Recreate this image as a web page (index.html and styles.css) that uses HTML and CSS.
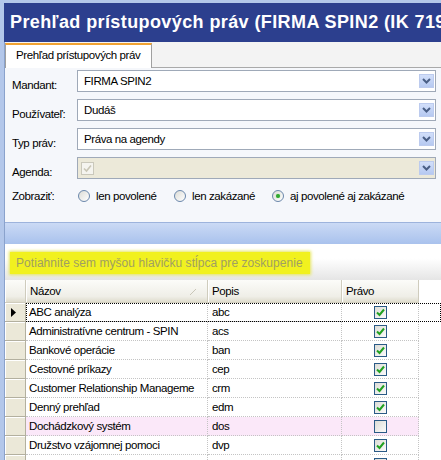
FILE: index.html
```html
<!DOCTYPE html>
<html>
<head>
<meta charset="utf-8">
<link rel="stylesheet" href="styles.css">
</head>
<body>
<div class="window">
  <div class="titlebar"><span>Prehľad prístupových práv (FIRMA SPIN2 (IK 71945)</span></div>
  <div class="body">
    <div class="tabstrip"><div class="tab">Prehľad prístupových práv</div></div>
    <div class="form">
      <div class="row">
        <label class="lbl">Mandant:</label>
        <div class="combo"><span class="val">FIRMA SPIN2</span><i class="btn"><svg width="15" height="14" viewBox="0 0 15 14"><path d="M4 5 L7.5 8.5 L11 5" fill="none" stroke="#4a5f86" stroke-width="2"/></svg></i></div>
      </div>
      <div class="row">
        <label class="lbl">Používateľ:</label>
        <div class="combo"><span class="val">Dudáš</span><i class="btn"><svg width="15" height="14" viewBox="0 0 15 14"><path d="M4 5 L7.5 8.5 L11 5" fill="none" stroke="#4a5f86" stroke-width="2"/></svg></i></div>
      </div>
      <div class="row">
        <label class="lbl">Typ práv:</label>
        <div class="combo"><span class="val">Práva na agendy</span><i class="btn"><svg width="15" height="14" viewBox="0 0 15 14"><path d="M4 5 L7.5 8.5 L11 5" fill="none" stroke="#4a5f86" stroke-width="2"/></svg></i></div>
      </div>
      <div class="row">
        <label class="lbl">Agenda:</label>
        <div class="combo disabled"><span class="dchk"><svg width="11" height="11" viewBox="0 0 11 11"><path d="M2 5.5 L4.5 8 L9 2.5" fill="none" stroke="#c9c6b6" stroke-width="1.6"/></svg></span><i class="btn"><svg width="15" height="14" viewBox="0 0 15 14"><path d="M4 5 L7.5 8.5 L11 5" fill="none" stroke="#4a5f86" stroke-width="2"/></svg></i></div>
      </div>
      <div class="row radios">
        <label class="lbl2">Zobraziť:</label>
        <div class="opt o1"><span class="radio"></span><span>len povolené</span></div>
        <div class="opt o2"><span class="radio"></span><span>len zakázané</span></div>
        <div class="opt"><span class="radio on"><span class="dot"></span></span><span>aj povolené aj zakázané</span></div>
      </div>
    </div>
    <div class="bluebar"></div>
    <div class="grouppanel"><div class="hint">Potiahnite sem myšou hlavičku stĺpca pre zoskupenie</div></div>
    <div class="grid">
      <div class="ghead">
        <div class="hc"></div>
        <div class="hc">Názov<svg class="sort" width="8" height="8" viewBox="0 0 8 8"><path d="M1 7 L7 1" stroke="#c9c6b8" stroke-width="1"/></svg></div>
        <div class="hc">Popis</div>
        <div class="hc">Právo</div>
      </div>
      <div class="grow focus">
        <div class="ind"><svg width="6" height="9" viewBox="0 0 6 9"><path d="M0 0 L5 4.5 L0 9 Z" fill="#000"/></svg></div>
        <div class="c">ABC analýza</div><div class="c p">abc</div><div class="c k"><span class="chk"><svg width="11" height="11" viewBox="0 0 11 11"><path d="M2 5.5 L4.5 8 L9 2.5" fill="none" stroke="#21a121" stroke-width="2"/></svg></span></div>
      </div>
      <div class="grow">
        <div class="ind"></div>
        <div class="c">Administratívne centrum - SPIN</div><div class="c p">acs</div><div class="c k"><span class="chk"><svg width="11" height="11" viewBox="0 0 11 11"><path d="M2 5.5 L4.5 8 L9 2.5" fill="none" stroke="#21a121" stroke-width="2"/></svg></span></div>
      </div>
      <div class="grow">
        <div class="ind"></div>
        <div class="c">Bankové operácie</div><div class="c p">ban</div><div class="c k"><span class="chk"><svg width="11" height="11" viewBox="0 0 11 11"><path d="M2 5.5 L4.5 8 L9 2.5" fill="none" stroke="#21a121" stroke-width="2"/></svg></span></div>
      </div>
      <div class="grow">
        <div class="ind"></div>
        <div class="c">Cestovné príkazy</div><div class="c p">cep</div><div class="c k"><span class="chk"><svg width="11" height="11" viewBox="0 0 11 11"><path d="M2 5.5 L4.5 8 L9 2.5" fill="none" stroke="#21a121" stroke-width="2"/></svg></span></div>
      </div>
      <div class="grow">
        <div class="ind"></div>
        <div class="c">Customer Relationship Manageme</div><div class="c p">crm</div><div class="c k"><span class="chk"><svg width="11" height="11" viewBox="0 0 11 11"><path d="M2 5.5 L4.5 8 L9 2.5" fill="none" stroke="#21a121" stroke-width="2"/></svg></span></div>
      </div>
      <div class="grow">
        <div class="ind"></div>
        <div class="c">Denný prehľad</div><div class="c p">edm</div><div class="c k"><span class="chk"><svg width="11" height="11" viewBox="0 0 11 11"><path d="M2 5.5 L4.5 8 L9 2.5" fill="none" stroke="#21a121" stroke-width="2"/></svg></span></div>
      </div>
      <div class="grow pink">
        <div class="ind"></div>
        <div class="c">Dochádzkový systém</div><div class="c p">dos</div><div class="c k"><span class="chk"></span></div>
      </div>
      <div class="grow">
        <div class="ind"></div>
        <div class="c">Družstvo vzájomnej pomoci</div><div class="c p">dvp</div><div class="c k"><span class="chk"><svg width="11" height="11" viewBox="0 0 11 11"><path d="M2 5.5 L4.5 8 L9 2.5" fill="none" stroke="#21a121" stroke-width="2"/></svg></span></div>
      </div>
      <div class="grow">
        <div class="ind"></div>
        <div class="c">Ekonomické hlásenia</div><div class="c p">ekh</div><div class="c k"><span class="chk"><svg width="11" height="11" viewBox="0 0 11 11"><path d="M2 5.5 L4.5 8 L9 2.5" fill="none" stroke="#21a121" stroke-width="2"/></svg></span></div>
      </div>
    </div>
  </div>
</div>
</body>
</html>
```
FILE: styles.css
```css
html, body {
  margin: 0;
  padding: 0;
}
body {
  width: 441px;
  height: 460px;
  overflow: hidden;
  background: #b3c7ea;
  font-family: "Liberation Sans", Arial, sans-serif;
  font-size: 11.5px;
  letter-spacing: -0.4px;
  color: #000;
}
.window {
  padding: 3px 0 0 4px;
  height: 457px;
  display: flex;
  flex-direction: column;
}
.titlebar {
  height: 39px;
  flex: none;
  background: #2c3f8e;
  color: #fff;
  font-weight: bold;
  font-size: 18px;
  letter-spacing: 0.4px;
  display: flex;
  align-items: center;
  padding-left: 6px;
  white-space: nowrap;
  overflow: hidden;
}
.body {
  flex: 1;
  border-left: 1px solid #8aa2cc;
  background: #fff;
  display: flex;
  flex-direction: column;
  min-height: 0;
}
.tabstrip {
  height: 26px;
  flex: none;
  box-sizing: border-box;
  background: #f3f3f3;
  border-bottom: 1px solid #a9a9a9;
  display: flex;
  align-items: flex-end;
  padding-top: 1px;
}
.tab {
  height: 25px;
  width: 147px;
  box-sizing: border-box;
  border-top: 2px solid #f0a232;
  border-left: 1px solid #a0a0a0;
  border-right: 1px solid #a0a0a0;
  background: #fff;
  margin-bottom: -1px;
  padding-left: 10px;
  line-height: 21px;
}
.form {
  height: 154px;
  flex: none;
  box-sizing: border-box;
  background: #f5f7fb;
  padding: 2px 5px 0 7px;
  display: flex;
  flex-direction: column;
  gap: 7px;
}
.row {
  display: flex;
  height: 22px;
}
.lbl {
  width: 65px;
  flex: none;
  padding-top: 9px;
  line-height: 13px;
}
.combo {
  flex: 1;
  box-sizing: border-box;
  height: 22px;
  border: 1px solid #9fa9b8;
  background: #fff;
  display: flex;
  align-items: center;
  padding-left: 6px;
}
.combo .val {
  flex: 1;
}
.combo.disabled {
  background: #ece9d9;
  padding-left: 3px;
  justify-content: space-between;
}
.btn {
  width: 15px;
  height: 14px;
  margin-right: 1px;
  margin-left: auto;
  box-sizing: border-box;
  background: linear-gradient(#d2dffa, #b6c9f1);
  border: 1px solid #bccbee;
  display: flex;
}
.btn svg {
  margin: -1px;
}
.dchk {
  width: 13px;
  height: 13px;
  box-sizing: border-box;
  border: 1px solid #cac8bb;
  background: #f5f4ef;
  display: flex;
  align-items: center;
  justify-content: center;
}
.radios {
  height: 13px;
  margin-top: 3px;
  align-items: center;
}
.lbl2 {
  width: 66px;
  flex: none;
}
.opt {
  display: flex;
  align-items: center;
  gap: 6px;
}
.o1 { width: 96px; }
.o2 { width: 98px; }
.radio {
  width: 12px;
  height: 12px;
  box-sizing: border-box;
  border: 1px solid #6a87ab;
  border-radius: 50%;
  background: linear-gradient(135deg, #dcdcd6, #fff);
  display: flex;
  align-items: center;
  justify-content: center;
}
.dot {
  width: 4px;
  height: 4px;
  border-radius: 50%;
  background: #31a831;
  box-shadow: 0 0 1px #6fd06f;
}
.bluebar {
  height: 22px;
  flex: none;
  box-sizing: border-box;
  border-top: 1px solid #9db3dc;
  background: linear-gradient(#cbdaf5, #a9c2ed);
}
.grouppanel {
  height: 36px;
  flex: none;
  box-sizing: border-box;
  background: linear-gradient(#ffffff, #ffffff 40%, #e5e5e5);
  padding: 8px 0 0 5px;
}
.hint {
  width: 300px;
  height: 22px;
  box-sizing: border-box;
  background: #f1f11f;
  box-shadow: 0 0 3px 1px #e6e65a;
  color: #a09f62;
  font-size: 12px;
  letter-spacing: 0.05px;
  line-height: 22px;
  padding-left: 6px;
  white-space: nowrap;
}
.grid {
  flex: 1;
  background: #fff;
}
.ghead, .grow {
  display: grid;
  grid-template-columns: 21px 182px 134px 77px;
}
.ghead {
  height: 23px;
}
.hc {
  box-sizing: border-box;
  height: 23px;
  background: linear-gradient(#fcfcf9, #efeee7 75%, #dedbcc);
  border-right: 1px solid #cfccbd;
  box-shadow: inset 1px 0 #fff;
  border-bottom: 1px solid #d0cdbe;
  padding-left: 4px;
  line-height: 22px;
  position: relative;
}
.sort {
  position: absolute;
  right: 10px;
  top: 8px;
}
.grow {
  height: 19px;
  position: relative;
}
.grow.focus::after {
  content: "";
  position: absolute;
  left: 21px;
  right: 0;
  top: 0;
  bottom: 0;
  border: 1px dotted #000;
  pointer-events: none;
}
.ind {
  box-sizing: border-box;
  background: #ebe8d8;
  border-right: 1px solid #b3b09f;
  border-bottom: 1px solid #b3b09f;
  box-shadow: inset 1px 1px #fff;
  display: flex;
  align-items: center;
  padding-left: 6px;
}
.c {
  box-sizing: border-box;
  border-right: 1px dotted #c4c4c4;
  border-bottom: 1px dotted #c4c4c4;
  padding-left: 3px;
  line-height: 18px;
  white-space: nowrap;
  overflow: hidden;
}
.c.p {
  padding-left: 4px;
}
.c.k {
  display: flex;
  align-items: center;
  justify-content: center;
  padding-left: 0;
}
.pink .c {
  background: #fbe8f9;
}
.chk {
  width: 13px;
  height: 13px;
  box-sizing: border-box;
  border: 1px solid #2a5a86;
  background: linear-gradient(135deg, #dcdcd6, #fbfbfb);
  display: flex;
  align-items: center;
  justify-content: center;
}
```
